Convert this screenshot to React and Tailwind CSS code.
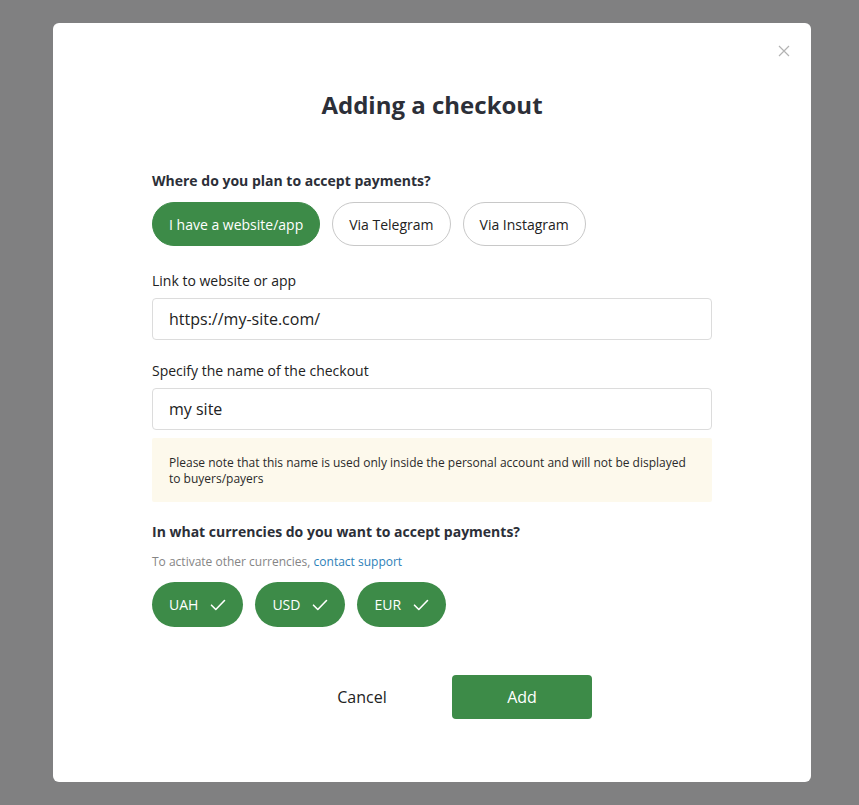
import React, { useState } from 'react';

const sources = ['I have a website/app', 'Via Telegram', 'Via Instagram'];
const currencies = ['UAH', 'USD', 'EUR'];

function Check() {
    return (
        <svg width="16" height="12" viewBox="0 0 16 12" fill="none" stroke="currentColor" strokeWidth="1.6" strokeLinecap="round" strokeLinejoin="round">
            <path d="M1.5 6.2l4.3 4.3L14.5 1.5" />
        </svg>
    );
}

export default function App() {
    const [source, setSource] = useState(0);

    return (
        <div className="min-h-[805px] bg-[#808081] flex pl-[53px] pt-[23px] pb-[23px]" style={{ fontFamily: '"Open Sans", "Liberation Sans", sans-serif' }}>
            {/* Modal */}
            <div className="w-[758px] h-[759px] bg-white rounded-[6px] flex flex-col px-[99px] pt-[20px]">
                <div className="flex justify-end -mr-[78px] h-[16px]">
                    <button className="text-[#b3b3b3]">
                        <svg width="12" height="12" viewBox="0 0 12 12" stroke="currentColor" strokeWidth="1.2">
                            <path d="M1 1l10 10M11 1L1 11" />
                        </svg>
                    </button>
                </div>

                <h1 className="mt-[30px] text-center text-[24px] leading-[32px] font-bold text-[#2c2f38]">Adding a checkout</h1>

                <p className="mt-[50px] text-[14px] leading-[20px] font-bold text-[#2c2f38]">Where do you plan to accept payments?</p>
                <div className="mt-[11px] flex gap-[12px]">
                    {sources.map((s, i) => (
                        <button
                            key={s}
                            onClick={() => setSource(i)}
                            className={
                                i === source
                                    ? 'h-[44px] px-[16px] rounded-full bg-[#3d8b48] border border-[#3d8b48] text-white text-[14px]'
                                    : 'h-[44px] px-[16px] rounded-full bg-white border border-[#c8c8c8] text-[#222] text-[14px]'
                            }
                        >
                            {s}
                        </button>
                    ))}
                </div>

                <label className="mt-[25px] text-[14px] leading-[20px] text-[#222]">Link to website or app</label>
                <input
                    className="mt-[7px] h-[42px] w-full border border-[#dcdcdc] rounded-[4px] px-[16px] text-[16px] text-[#222] outline-none"
                    defaultValue="https://my-site.com/"
                />

                <label className="mt-[21px] text-[14px] leading-[20px] text-[#222]">Specify the name of the checkout</label>
                <input
                    className="mt-[7px] h-[42px] w-full border border-[#dcdcdc] rounded-[4px] px-[16px] text-[16px] text-[#222] outline-none"
                    defaultValue="my site"
                />
                <div className="mt-[8px] h-[64px] bg-[#fdf9ec] rounded-[2px] px-[17px] pt-[17px] text-[12px] leading-[16px] text-[#2a2a2a]">
                    Please note that this name is used only inside the personal account and will not be displayed to buyers/payers
                </div>

                <p className="mt-[20px] text-[14px] leading-[20px] font-bold text-[#2c2f38]">In what currencies do you want to accept payments?</p>
                <p className="mt-[11px] text-[12px] leading-[18px] text-[#858585]">
                    To activate other currencies, <a className="text-[#2d7fb8]">contact support</a>
                </p>
                <div className="mt-[11px] flex gap-[12px]">
                    {currencies.map((c) => (
                        <span key={c} className="h-[45px] px-[17px] rounded-full bg-[#3d8b48] text-white text-[14px] flex items-center gap-[12px]">
                            {c}
                            <Check />
                        </span>
                    ))}
                </div>

                <div className="mt-[48px] flex justify-center gap-[20px] pl-[20px]">
                    <button className="w-[140px] h-[44px] text-[16px] text-[#222]">Cancel</button>
                    <button className="w-[140px] h-[44px] rounded-[4px] bg-[#3d8b48] text-white text-[16px]">Add</button>
                </div>
            </div>
        </div>
    );
}
